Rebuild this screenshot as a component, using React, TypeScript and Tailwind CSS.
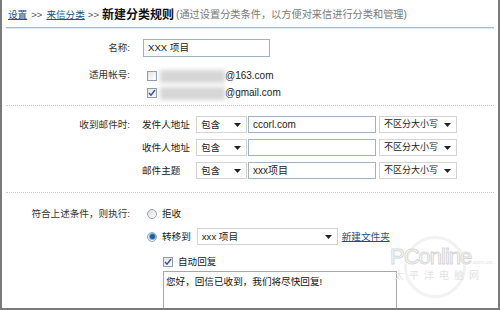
import React from "react";

const font = "font-['Liberation_Sans','Noto_Sans_CJK_SC',sans-serif]";

const Arrow = () => (
  <svg width="7" height="4" viewBox="0 0 7 4" className="shrink-0">
    <path d="M0 0h7L3.5 4z" fill="#222" />
  </svg>
);

const FakeSelect = ({
  value,
  className,
}: {
  value: string;
  className: string;
}) => (
  <div
    className={`flex items-center justify-between h-[17px] border border-[#d4d4d4] bg-white pl-[4px] pr-[5px] text-[#222] ${className}`}
  >
    <span className="whitespace-nowrap">{value}</span>
    <Arrow />
  </div>
);

const TextBox = ({ value, className }: { value?: string; className: string }) => (
  <div
    className={`flex items-center border border-[#9fb3c4] bg-white pl-[4px] text-[#222] ${className}`}
  >
    {value}
  </div>
);

const CheckBox = ({ checked }: { checked?: boolean }) => (
  <div className="w-[10px] h-[10px] border border-[#8c9cab] bg-gradient-to-br from-[#e4e4e4] to-white flex items-center justify-center shrink-0">
    {checked && (
      <svg width="8" height="8" viewBox="0 0 8 8">
        <path d="M1 4l2 2.2L7 1" stroke="#2c52a8" strokeWidth="1.4" fill="none" />
      </svg>
    )}
  </div>
);

const Radio = ({ checked }: { checked?: boolean }) => (
  <div className="w-[10px] h-[10px] rounded-full border border-[#9aa6b1] bg-gradient-to-br from-[#dcdcdc] to-white flex items-center justify-center shrink-0">
    {checked && <div className="w-[5px] h-[5px] rounded-full bg-[#1f5f96] ring-1 ring-[#6fb0dd]" />}
  </div>
);

const Label = ({ children }: { children: React.ReactNode }) => (
  <div className="w-[128px] text-right text-[#333] shrink-0 whitespace-nowrap">{children}</div>
);

const conditions = [
  { field: "发件人地址", value: "ccorl.com" },
  { field: "收件人地址", value: "" },
  { field: "邮件主题", value: "xxx项目" },
];

export default function App() {
  return (
    <div
      className={`relative w-[500px] h-[310px] overflow-hidden bg-white border-l-2 border-r-2 border-b-2 border-[#7a7a7a] text-[9.6px] leading-none ${font}`}
    >
      {/* breadcrumb */}
      <div className="h-[27px] flex items-center pl-[6px] pt-[3px] text-[#333] whitespace-nowrap">
        <a className="text-[#1d4f8c] underline">设置</a>
        <span className="mx-[4px] text-[#555]">&gt;&gt;</span>
        <a className="text-[#1d4f8c] underline">来信分类</a>
        <span className="mx-[3px] text-[#555]">&gt;&gt;</span>
        <span className="text-[12px] font-bold text-[#111]">新建分类规则</span>
        <span className="ml-[2px] text-[10.2px] text-[#777]">(通过设置分类条件，以方便对来信进行分类和管理)</span>
      </div>
      <div className="mx-[4px] border-t border-[#a7bfd2]" />
      <div className="mx-[4px] border-t border-[#dde7ef]" />

      {/* name + accounts */}
      <div className="mx-[4px] border-b border-dotted border-[#c8c8c8] pt-[10px] pb-[4px]">
        <div className="flex items-center h-[18px] -ml-[4px]">
          <Label>名称: </Label>
          <TextBox value="XXX 项目" className="ml-[13px] w-[127px] h-[18px]" />
        </div>
        <div className="flex items-start mt-[10px] -ml-[4px]">
          <div className="h-[16px] flex items-center">
            <Label>适用帐号: </Label>
          </div>
          <div className="ml-[17px] flex flex-col">
            {["@163.com", "@gmail.com"].map((d, i) => (
              <div key={d} className="flex items-center h-[16px] mt-[1px]">
                <CheckBox checked={i === 1} />
                <div className="ml-[3px] w-[65px] h-[13px] bg-[#d6d6d6] blur-[2px]" />
                <span className="text-[#222] text-[10px]">{d}</span>
              </div>
            ))}
          </div>
        </div>
      </div>

      {/* conditions */}
      <div className="mx-[4px] border-b border-dotted border-[#c8c8c8] pt-[10px] pb-[13px]">
        <div className="flex items-start -ml-[4px]">
          <div className="h-[17px] flex items-center">
            <Label>收到邮件时: </Label>
          </div>
          <div className="ml-[12px] flex flex-col gap-[6px]">
            {conditions.map((c) => (
              <div key={c.field} className="flex items-center h-[17px]">
                <span className="w-[54px] text-[#222]">{c.field}</span>
                <FakeSelect value="包含" className="w-[51px]" />
                <TextBox value={c.value} className="ml-[1px] w-[128px] h-[17px] text-[10px]" />
                <FakeSelect value="不区分大小写" className="ml-[3px] w-[78px] pl-[3px] pr-[4px] text-[9px]" />
              </div>
            ))}
          </div>
        </div>
      </div>

      {/* actions */}
      <div className="pt-[13px]">
        <div className="flex items-start">
          <div className="h-[16px] flex items-center">
            <Label>符合上述条件，则执行: </Label>
          </div>
          <div className="ml-[17px] flex flex-col">
            <div className="flex items-center h-[16px]">
              <Radio />
              <span className="ml-[5px] text-[#222]">拒收</span>
            </div>
            <div className="flex items-center h-[17px] mt-[6px]">
              <Radio checked />
              <span className="ml-[5px] text-[#222]">转移到</span>
              <FakeSelect value="xxx 项目" className="ml-[6px] w-[141px]" />
              <a className="ml-[4px] text-[#1d4f8c] underline">新建文件夹</a>
            </div>
            <div className="ml-[16px] flex items-center h-[16px] mt-[9px]">
              <CheckBox checked />
              <span className="ml-[5px] text-[#222]">自动回复</span>
            </div>
            <div className="ml-[16px] mt-[1px] w-[234px] h-[60px] border border-[#a8a8a8] px-[2px] pt-[5px] text-[#111]">
              您好，回信已收到，我们将尽快回复!
            </div>
          </div>
        </div>
      </div>

      {/* watermark */}
      <div className="absolute left-[388px] top-[246px] pointer-events-none select-none whitespace-nowrap">
        <div className="w-[62px] h-[62px] rounded-full border-[3px] border-[#f2f2f2] absolute left-[14px] -top-[10px]" />
        <div className="relative flex items-end">
          <span className="text-[22px] text-white [-webkit-text-stroke:1px_#d6d6d6] tracking-[-1px] font-['Liberation_Sans']">
            PConline
          </span>
          <span className="text-[6px] text-[#dedede] mb-[3px]">.com.cn</span>
        </div>
        <div className="relative mt-[3px] ml-[4px] tracking-[5px] text-[10px] text-[#e2e2e2]">
          太平洋电脑网
        </div>
      </div>
    </div>
  );
}
